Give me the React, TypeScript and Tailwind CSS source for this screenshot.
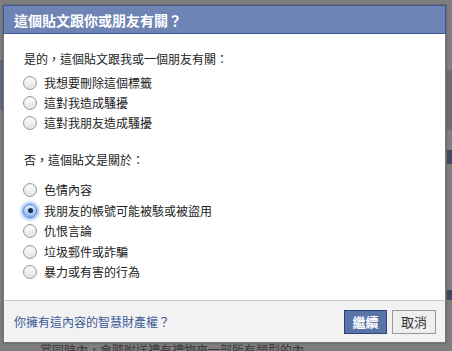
import React from "react";

const font = { fontFamily: '"Noto Sans CJK TC", "Noto Sans CJK SC", "Liberation Sans", sans-serif' };

function Radio({ checked }: { checked?: boolean }) {
  if (checked) {
    return (
      <span className="relative flex h-[14px] w-[14px] shrink-0 items-center justify-center rounded-full border border-[#4a7fd6] bg-gradient-to-b from-[#dbe9fb] to-[#8fb7ee] shadow-[0_0_3px_2px_rgba(80,140,230,0.6)]">
        <span className="h-[5px] w-[5px] rounded-full bg-[#1d2a44]" />
      </span>
    );
  }
  return (
    <span className="h-[14px] w-[14px] shrink-0 rounded-full border border-[#9a9a9a] bg-gradient-to-b from-[#ffffff] to-[#e2e2e2] shadow-[inset_0_1px_1px_rgba(0,0,0,0.08)]" />
  );
}

function Row({ label, checked, h }: { label: string; checked?: boolean; h: string }) {
  return (
    <div className={`flex items-center gap-[7px] pl-[19px] ${h}`}>
      <Radio checked={checked} />
      <span className="text-[12px] leading-[16px] text-[#222]">{label}</span>
    </div>
  );
}

export default function App() {
  return (
    <div lang="zh-Hant-TW" className="relative h-[351px] w-[452px] overflow-hidden bg-[#7e7e7e]" style={font}>
      <div className="absolute left-[447px] top-[70px] h-[60px] w-[5px] bg-[#6c6c6c]" />
      <div className="absolute left-[447px] top-[150px] h-[14px] w-[5px] bg-[#3f4a60]" />
      <div className="absolute left-[447px] top-[290px] h-[10px] w-[5px] bg-[#3f4a60]" />
      <div className="absolute left-0 top-[60px] h-[50px] w-[3px] bg-[#5f6a80]" />
      <div className="absolute left-[40px] top-[342px] whitespace-nowrap text-[12px] leading-[16px] text-[#3a3a3a]">
        賞同時內，會隨附送禮有禮物來一部所有類型的內
      </div>
      <div className="pl-[3px] pt-[5px]">
        <div className="relative flex w-[443px] flex-col shadow-[0_0_2px_rgba(0,0,0,0.4)]">
          <div className="flex h-[29px] items-center border border-[#3b5998] bg-[#6d84b4] px-[10px]">
            <span className="text-[14px] font-bold leading-[18px] text-white">這個貼文跟你或朋友有關？</span>
          </div>
          <div className="flex h-[266px] flex-col border-x border-[#777] bg-white pt-[17px]">
            <div className="pl-[20px] text-[12px] leading-[16px] text-[#222]">是的，這個貼文跟我或一個朋友有關：</div>
            <div className="mt-[6px] flex flex-col">
              <Row h="h-[20px]" label="我想要刪除這個標籤" />
              <Row h="h-[20px]" label="這對我造成騷擾" />
              <Row h="h-[20px]" label="這對我朋友造成騷擾" />
            </div>
            <div className="mt-[19px] pl-[20px] text-[12px] leading-[16px] text-[#222]">否，這個貼文是關於：</div>
            <div className="mt-[12px] flex flex-col">
              <Row h="h-[20.5px]" label="色情內容" />
              <Row h="h-[20.5px]" checked label="我朋友的帳號可能被駭或被盜用" />
              <Row h="h-[20.5px]" label="仇恨言論" />
              <Row h="h-[20.5px]" label="垃圾郵件或詐騙" />
              <Row h="h-[20.5px]" label="暴力或有害的行為" />
            </div>
          </div>
          <div className="flex h-[43px] items-center justify-between border-x border-b border-t border-[#777] border-t-[#cccccc] bg-[#f2f2f2] pl-[10px] pr-[9px]">
            <span className="text-[12px] leading-[16px] text-[#3b5998]">你擁有這內容的智慧財產權？</span>
            <div className="flex items-center gap-[5px]">
              <div className="flex h-[24px] w-[43px] items-center justify-center border border-[#29447e] bg-[#5b74a8] text-[13px] font-bold text-white">
                繼續
              </div>
              <div className="flex h-[24px] w-[44px] items-center justify-center border border-[#999] bg-[#eeeeee] text-[13px] text-[#333]">
                取消
              </div>
            </div>
          </div>
        </div>
      </div>
    </div>
  );
}
